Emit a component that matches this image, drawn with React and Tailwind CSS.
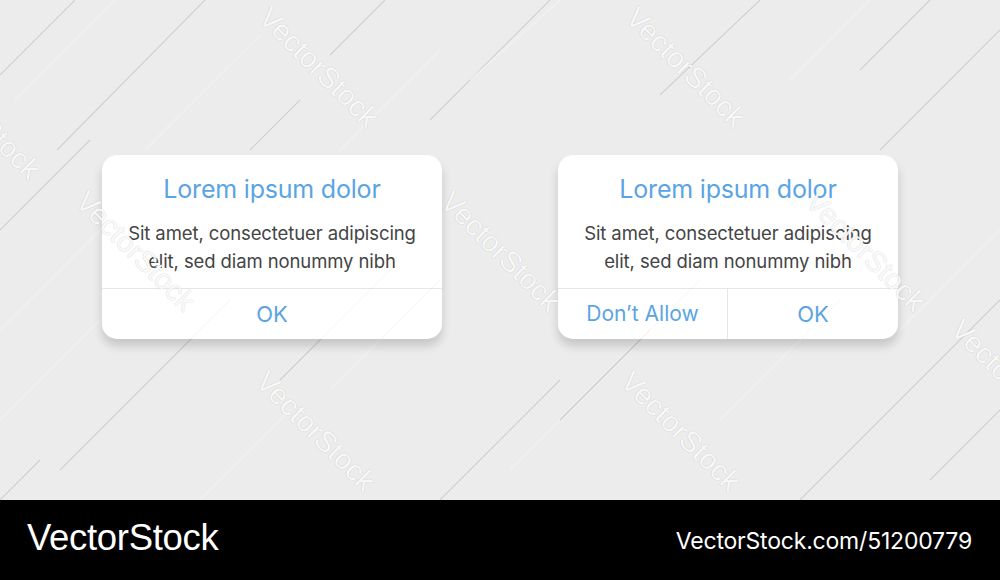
import React from "react";

const marks = [
  [318, 68], [685, 68], [-20, 120],
  [135, 252], [500, 252], [865, 252],
  [315, 432], [680, 432], [1010, 380],
];

// diagonal hairlines of the backdrop: [x1, y1, x2, y2, tone]
const lines = [
  [0, 75, 75, 0, "d"], [57, 150, 205, 0, "d"], [15, 100, 115, 0, "w"], [145, 150, 260, 35, "w"],
  [330, 55, 385, 0, "d"], [430, 120, 550, 0, "d"], [470, 80, 560, 0, "w"], [660, 95, 760, 0, "d"],
  [790, 80, 870, 0, "w"], [880, 150, 1000, 30, "d"], [860, 70, 930, 0, "d"],
  [0, 230, 90, 140, "d"], [0, 330, 100, 230, "w"], [250, 150, 300, 100, "d"], [340, 150, 440, 50, "w"],
  [60, 470, 230, 300, "d"], [0, 420, 100, 320, "w"], [280, 380, 390, 270, "d"], [330, 390, 440, 280, "w"],
  [440, 500, 560, 380, "d"], [510, 470, 650, 330, "w"], [560, 420, 700, 280, "d"],
  [720, 420, 840, 300, "w"], [800, 500, 1000, 300, "d"], [900, 330, 1000, 230, "w"], [930, 480, 1000, 410, "d"],
  [200, 500, 290, 410, "w"], [0, 500, 40, 460, "d"],
];

function Dialog({ two }) {
  return (
    <div className="w-[340px] h-[184px] bg-white rounded-[15px] shadow-[0_7px_10px_rgba(0,0,0,0.16)] flex flex-col overflow-hidden">
      <div className="pt-[18px] pb-[13px] flex flex-col items-center text-center">
        <div className="text-[25px] leading-[32px] text-[#5ba4e4] tracking-[-0.2px]">Lorem ipsum dolor</div>
        <div className="mt-[14px] text-[18.5px] leading-[28px] text-[#444444] tracking-[-0.1px]">
          Sit amet, consectetuer adipiscing
          <br />
          elit, sed diam nonummy nibh
        </div>
      </div>
      <div className="flex-1 border-t border-[#e6e6e6] flex">
        {two ? (
          <>
            <div className="w-[170px] flex items-center justify-center border-r border-[#e6e6e6] text-[21px] text-[#5ba4e4]">
              Don’t Allow
            </div>
            <div className="flex-1 flex items-center justify-center text-[22px] text-[#5ba4e4]">OK</div>
          </>
        ) : (
          <div className="flex-1 flex items-center justify-center text-[22px] text-[#5ba4e4]">OK</div>
        )}
      </div>
    </div>
  );
}

export default function App() {
  return (
    <div className="w-[1000px] h-[580px] flex flex-col bg-[#ececec] font-['Inter',sans-serif] overflow-hidden">
      <div className="relative h-[500px]">
        <svg className="absolute inset-0" width="1000" height="500">
          {lines.map(([a, b, c, d, t], i) => (
            <line key={i} x1={a} y1={b} x2={c} y2={d} stroke={t === "d" ? "#d6d6d6" : "#f8f8f8"} strokeWidth="1.1" />
          ))}
        </svg>
        <div className="relative flex gap-[116px] pt-[155px] pl-[102px]">
          <Dialog />
          <Dialog two />
        </div>
        <svg className="absolute inset-0 pointer-events-none" width="1000" height="500">
          {lines.map(([a, b, c, d], i) => (
            <line key={i} x1={a} y1={b} x2={c} y2={d} stroke="#000" strokeOpacity="0.035" strokeWidth="1" />
          ))}
        </svg>
        {marks.map(([x, y], i) => (
          <div
            key={i}
            className="absolute pointer-events-none w-0 h-0 flex items-center justify-center"
            style={{ left: x, top: y }}
          >
            <span className="rotate-45 whitespace-nowrap font-['Liberation_Sans',sans-serif] text-[29px] text-white/90 [text-shadow:0_0_1px_rgba(0,0,0,0.16),0_0_1px_rgba(0,0,0,0.1)]">
              VectorStock
            </span>
          </div>
        ))}
      </div>
      <div className="h-[80px] bg-black flex items-center justify-between pl-[27px] pr-[28px]">
        <span className="font-['Liberation_Sans',sans-serif] text-[36.5px] text-white tracking-[-0.3px] -mt-[3px]">VectorStock</span>
        <span className="text-[23px] text-white tracking-[-0.2px] mt-[3px]">VectorStock.com/51200779</span>
      </div>
    </div>
  );
}
